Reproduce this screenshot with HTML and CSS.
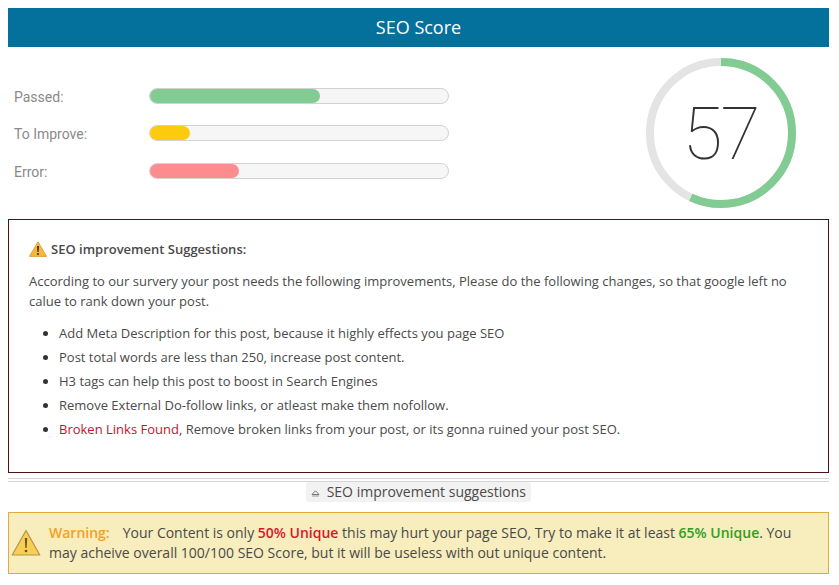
FILE: index.html
```html
<!DOCTYPE html>
<html lang="en">
<head>
<meta charset="utf-8">
<title>SEO Score</title>
<link rel="stylesheet" href="styles.css">
</head>
<body>
<h1 class="title">SEO Score</h1>
<section class="score">
  <div class="bars">
    <div class="row"><span class="label">Passed:</span><div class="track"><div class="fill green" style="width:57%"></div></div></div>
    <div class="row"><span class="label">To Improve:</span><div class="track"><div class="fill yellow" style="width:13.3%"></div></div></div>
    <div class="row"><span class="label">Error:</span><div class="track"><div class="fill red" style="width:30%"></div></div></div>
  </div>
  <div class="ring">
    <svg class="ring-svg" width="152" height="152" viewBox="0 0 152 152">
      <circle class="ring-bg" cx="76" cy="76" r="71"/>
      <circle class="ring-fg" cx="76" cy="76" r="71" pathLength="100" stroke-dasharray="57 43" transform="rotate(-90 76 76)"/>
    </svg>
    <span class="ring-num">57</span>
  </div>
</section>
<section class="panel">
  <p class="panel-head">
    <svg class="warn-small" width="18" height="16" viewBox="0 0 18 16">
      <path d="M9 .8 17.6 15.4H.4Z" fill="#f5b93a" stroke="#d8962a" stroke-width=".8" stroke-linejoin="round"/>
      <path d="M8 5h2l-.4 6H8.400Z" fill="#3c3020"/><circle cx="9" cy="13" r="1.100" fill="#3c3020"/>
    </svg>
    <strong class="head-text">SEO improvement Suggestions:</strong>
  </p>
  <p class="panel-text">According to our survery your post needs the following improvements, Please do the following changes, so that google left no calue to rank down your post.</p>
  <ul class="list">
    <li>Add Meta Description for this post, because it highly effects you page SEO</li>
    <li>Post total words are less than 250, increase post content.</li>
    <li>H3 tags can help this post to boost in Search Engines</li>
    <li>Remove External Do-follow links, or atleast make them nofollow.</li>
    <li><span class="broken">Broken Links Found</span>, Remove broken links from your post, or its gonna ruined your post SEO.</li>
  </ul>
</section>
<div class="divider"></div>
<div class="toggle-wrap">
  <span class="toggle">
    <svg class="caret" width="9" height="7" viewBox="0 0 9 7"><path d="M4.500.8 8 4.500H1Z" fill="none" stroke="#777" stroke-width="1"/><path d="M1 6h7" stroke="#999" stroke-width="1"/></svg>
    SEO improvement suggestions
  </span>
</div>
<section class="warning">
  <svg class="warn-big" width="30" height="28" viewBox="0 0 30 28">
    <path d="M15 1.500 28.800 26H1.200Z" fill="#f7cf55" stroke="#b9924a" stroke-width="1.200" stroke-linejoin="round"/>
    <path d="M13.800 9h2.400l-.6 10h-1.200Z" fill="#6a5120"/><circle cx="15" cy="22" r="1.300" fill="#6a5120"/>
  </svg>
  <p class="warning-text"><strong class="w-label">Warning:</strong><span class="w-gap"></span>Your Content is only <strong class="w-red">50% Unique</strong> this may hurt your page SEO, Try to make it at least <strong class="w-green">65% Unique</strong>. You may acheive overall 100/100 SEO Score, but it will be useless with out unique content.</p>
</section>
</body>
</html>
```
FILE: styles.css
```css
* { box-sizing: border-box; }
html, body { margin: 0; padding: 0; }
body {
  padding: 8px 10px 0 8px;
  background: #fff;
  font-family: "Open Sans", "Liberation Sans", sans-serif;
  font-size: 13px;
  color: #4a4a4a;
}
.title {
  margin: 0;
  height: 39px;
  line-height: 39px;
  background: #04709c;
  color: #fff;
  font-size: 18px;
  font-weight: 400;
  text-align: center;
}
.score {
  display: flex;
  justify-content: space-between;
  height: 172px;
}
.bars {
  display: flex;
  flex-direction: column;
  gap: 21px;
  padding: 40.4px 0 0 6px;
}
.row {
  display: flex;
  align-items: center;
  height: 16.500px;
}
.label {
  width: 135px;
  padding-top: 2px;
  font-family: Roboto, sans-serif;
  font-size: 14px;
  color: #8a8a8a;
}
.track {
  width: 300px;
  height: 16px;
  border: 1px solid #d2d2d2;
  border-radius: 8px;
  background: #f6f6f6;
}
.fill { height: 100%; border-radius: 7px; }
.green { background: #82cc94; }
.yellow { background: #fdcb0e; }
.red { background: #fd8c8e; }
.ring {
  position: relative;
  width: 152px;
  height: 152px;
  margin: 10px 32.500px 0 0;
}
.ring-svg { display: block; }
.ring-bg, .ring-fg { fill: none; stroke-width: 8; }
.ring-bg { stroke: #e4e4e4; }
.ring-fg { stroke: #82cc94; }
.ring-num {
  position: absolute;
  inset: 0;
  padding-top: 2px;
  display: flex;
  align-items: center;
  justify-content: center;
  font-family: Roboto, sans-serif;
  font-weight: 100;
  font-size: 73px;
  letter-spacing: -2px;
  color: #333;
}
.panel {
  height: 254px;
  border: 1px solid #4f1016;
  padding: 20px 20px 0;
}
.panel-head {
  display: flex;
  align-items: center;
  gap: 4px;
  margin: 0 0 13px;
  line-height: 18px;
}
.head-text { font-weight: 600; }
.panel-text { margin: 0 0 10px; line-height: 20px; }
.list { margin: 0; padding: 0 0 0 30px; }
.list li { line-height: 24px; }
.list li::marker { color: #333; }
.broken { color: #c8102e; }
.divider {
  height: 4px;
  margin-top: 5px;
  border-top: 1px solid #d4d4d4;
  border-bottom: 1px solid #d4d4d4;
}
.toggle-wrap { text-align: center; height: 30px; }
.toggle {
  display: inline-block;
  height: 20px;
  line-height: 20px;
  padding: 0 5px;
  background: #f2f2f2;
  border-radius: 3px;
  font-size: 14px;
}
.caret { margin-right: 3px; }
.warning {
  display: flex;
  align-items: center;
  gap: 8px;
  height: 62px;
  padding: 0 10px 0 2px;
  border: 1px solid #e3ab3c;
  background: #f7edbd;
  font-size: 14px;
}
.warn-big { flex: none; }
.warning-text { margin: 0; line-height: 20px; }
.w-label { color: #f4a023; font-weight: 600; }
.w-gap { display: inline-block; width: 13px; }
.w-red { color: #d9162b; font-weight: 600; }
.w-green { color: #2f9e1f; font-weight: 600; }
```
